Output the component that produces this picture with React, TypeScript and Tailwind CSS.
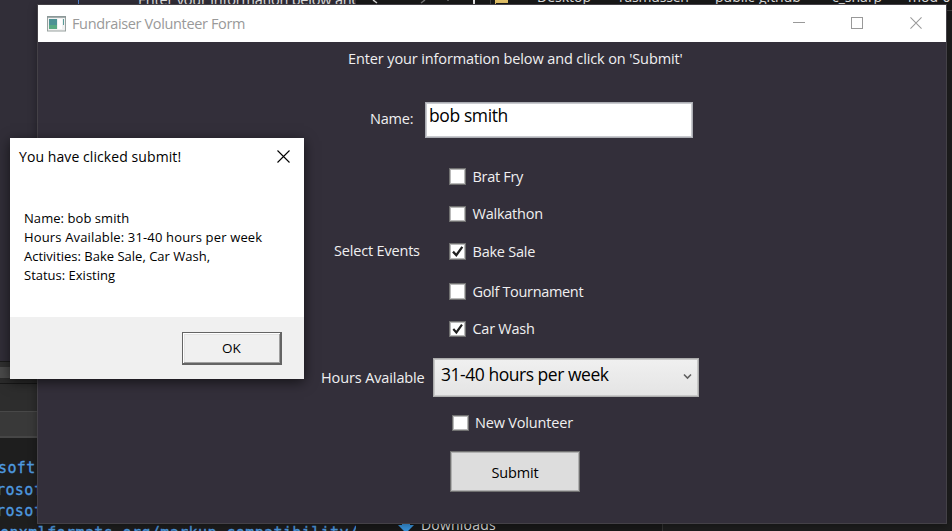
import type { ReactNode } from 'react';

const events = [
  { label: 'Brat Fry', checked: false, row: 'mt-[30px] h-[17px]', track: 'tracking-[-0.3px]' },
  { label: 'Walkathon', checked: false, row: 'mt-[21px] h-4', track: 'tracking-[-0.24px]' },
  { label: 'Bake Sale', checked: true, row: 'mt-[21px] h-[17px]', track: 'tracking-[-0.24px]' },
  { label: 'Golf Tournament', checked: false, row: 'mt-[23px] h-[17px]', track: 'tracking-[-0.33px]' },
  { label: 'Car Wash', checked: true, row: 'mt-[21px] h-4', track: 'tracking-[-0.26px]' },
];

function Check({ checked }: { checked: boolean }) {
  return (
    <span className="block h-full w-[17px] shrink-0 border border-[#707070] bg-white shadow-[inset_0_0_0_1px_#b9b9b9]">
      {checked && (
        <svg viewBox="0 0 15 15" className="h-full w-full" fill="none" stroke="#212121" strokeWidth="2.3">
          <path d="M3 7.6 6.3 11.2 12.3 2.8" />
        </svg>
      )}
    </span>
  );
}

function Cross({ className }: { className: string }) {
  return (
    <svg viewBox="0 0 13 13" className={className} fill="none" stroke="currentColor" strokeWidth="1.1">
      <path d="M.5.5l12 12M12.5.5l-12 12" />
    </svg>
  );
}

function Code({ children }: { children: ReactNode }) {
  return <div className="h-[21.5px] whitespace-pre">{children}</div>;
}

function Backdrop() {
  return (
    <div className="flex h-full bg-[#1e1e1e]">
      <div className="flex w-[356px] shrink-0 flex-col">
        <div className="flex h-[361px] shrink-0 bg-[#312e38]">
          <div className="h-full w-[78px]" />
          <div className="h-full w-px bg-[#5387d8]" />
          <div className="-mt-[12px] ml-[59px] h-6 w-[218px] overflow-hidden whitespace-nowrap text-[14.5px] leading-6 tracking-[-0.2px] text-[#e4e4e4]">
            Enter your information below and
          </div>
        </div>
        <div className="h-px shrink-0 bg-[#1b1b1b]" />
        <div className="h-[5px] shrink-0 bg-[#303030]" />
        <div className="h-[11px] shrink-0 bg-[#4a4a4a]" />
        <div className="h-[5px] shrink-0 bg-[#2b2b2b]" />
        <div className="h-px shrink-0 bg-[#181818]" />
        <div className="h-[27px] shrink-0 bg-[#2d2d2d]" />
        <div className="h-px shrink-0 bg-[#484848]" />
        <div className="h-6 shrink-0 bg-[#393939]" />
        <div className="h-0.5 shrink-0 bg-[#464646]" />
        <div className="h-[93px] shrink-0 overflow-hidden pt-[20px] font-['DejaVu_Sans_Mono',monospace] text-[15px] leading-[21.5px] tracking-[0.4px] text-[#4e9be0] [-webkit-text-stroke:0.3px_#4e9be0]">
          <Code><span className="-ml-[2px]">soft.com/winfx/</span></Code>
          <Code><span className="-ml-[4px]">rosoft.com/</span></Code>
          <Code><span className="-ml-[4px]">rosoft.com/</span></Code>
          <Code>enxmlformats.org/markup-compatibility/</Code>
        </div>
      </div>
      <div className="flex flex-1 flex-col overflow-hidden">
        <div className="flex h-[11px] shrink-0 overflow-hidden border-b border-[#3d3d3d] bg-[#191919] text-[14px] leading-5 text-[#e2e2e2]">
          <svg className="h-[5px] w-[140px] shrink-0" viewBox="0 0 140 5" fill="none">
            <path d="M17 0l4 3" stroke="#ddd" strokeWidth="1.5" />
            <path d="M69 0l-4 3" stroke="#777" strokeWidth="1.5" />
            <path d="M92 0v1" stroke="#999" />
            <path d="M118 0v4" stroke="#eee" strokeWidth="2" />
            <path d="M134.5 0v5" stroke="#444" />
            <path d="M140 0v4h-1v-4z" fill="#e8c66a" />
          </svg>
          <span className="h-[3px] w-3 shrink-0 bg-[#e8c66a]" />
          <div className="-mt-[13px] flex shrink-0 whitespace-nowrap">
            <span className="ml-[29px] w-[82px]">Desktop</span>
            <span className="w-[96px] tracking-[-0.2px]">rasmussen</span>
            <span className="w-[117px]">public-github</span>
            <span className="w-[76px]">c_sharp</span>
            <span>mod-01</span>
          </div>
        </div>
        <div className="h-[9px] shrink-0 bg-[#191919]" />
        <div className="flex-1 bg-[#1f1f1f]" />
        <div className="flex h-[11px] shrink-0">
          <div className="flex w-[306px] items-start bg-[#191919] pl-[42px]">
            <svg viewBox="0 0 16 11" className="h-[11px] w-4" fill="#3a96e0">
              <path d="M4 0h8v5h4l-6 6H6L0 5h4z" />
            </svg>
            <span className="-mt-[5px] ml-[7px] text-[14px] leading-5 tracking-[0.2px] text-[#dedede]">Downloads</span>
          </div>
          <div className="flex-1 border-l border-[#333] bg-[#1e1e1e]" />
        </div>
      </div>
    </div>
  );
}

function FormWindow() {
  return (
    <section className="absolute left-[37px] top-1 flex h-[520px] w-[910px] flex-col border border-[#444147] bg-[#332f3a] shadow-[0_2px_8px_rgba(0,0,0,.35)]">
      <header className="flex h-[37px] shrink-0 items-center bg-white text-[#999]">
        <svg viewBox="0 0 20 16" className="ml-[9px] h-4 w-5">
          <rect x=".5" y=".5" width="18" height="14.5" fill="#f1f1f1" stroke="#98a19f" />
          <path d="M0 1h19" stroke="#899696" strokeWidth="1.5" />
          <rect x="2" y="3" width="8" height="10" fill="#4e9395" />
          <rect x="2" y="9" width="8" height="4" fill="#5aaa83" />
          <rect x="11" y="3" width="4" height="10" fill="#fff" />
          <path d="M16.5 3v6" stroke="#5a9d9a" />
        </svg>
        <span className="ml-[5px] flex-1 text-[14.5px] leading-5 tracking-[-0.36px]">Fundraiser Volunteer Form</span>
        <span className="mb-[3px] h-px w-3 bg-[#999]" />
        <span className="mb-px ml-[46px] h-3 w-3 border border-[#999]" />
        <Cross className="mb-px ml-[47px] mr-[24px] h-3 w-3" />
      </header>
      <main className="text-[14.5px] leading-5 text-[#f0eff1]">
        <p className="ml-[310px] mt-[7px] h-5 whitespace-nowrap tracking-[-0.12px]">
          Enter your information below and click on 'Submit'
        </p>
        <div className="ml-[332px] mt-[33px] flex h-9">
          <label className="mt-[7px] w-[55px] tracking-[-0.2px]">Name:</label>
          <div className="h-9 w-[268px] border border-[#abadb3] bg-white pl-[3px] text-[17.5px] leading-6 tracking-[-0.4px] text-black shadow-[inset_0_0_0_1px_#c9cacf]">
            bob smith
          </div>
        </div>
        <div className="ml-[296px] flex h-[199px]">
          <span className="mt-[103px] w-[115px] tracking-[-0.18px]">Select Events</span>
          <div>
            {events.map((e) => (
              <div key={e.label} className={`flex items-center ${e.row}`}>
                <Check checked={e.checked} />
                <span className={`ml-[6.5px] whitespace-nowrap ${e.track}`}>{e.label}</span>
              </div>
            ))}
          </div>
        </div>
        <div className="ml-[283px] mt-[21px] flex h-[39px]">
          <label className="mt-[10px] w-[112px] whitespace-nowrap tracking-[-0.12px]">Hours Available</label>
          <div className="flex h-[39px] w-[266px] justify-between border border-[#acacac] bg-linear-to-b from-[#f0f0f0] to-[#e4e4e4] pl-[7px] pr-[6px] pt-[3px] text-[17.5px] leading-6 tracking-[-0.47px] text-black shadow-[inset_0_0_0_1px_#c8c8c8]">
            31-40 hours per week
            <svg viewBox="0 0 9 7" className="mt-[11px] h-[7px] w-[9px]" fill="none" stroke="#606060" strokeWidth="1.6">
              <path d="M1 1.5 4.5 5 8 1.5" />
            </svg>
          </div>
        </div>
        <div className="ml-[414px] mt-[18px] flex h-4 items-center">
          <Check checked={false} />
          <span className="ml-[6px] tracking-[-0.18px]">New Volunteer</span>
        </div>
        <button className="ml-[412px] mt-5 flex h-[41px] w-[130px] items-center justify-center border border-[#707070] bg-[#ddd] pt-0.5 tracking-[-0.2px] text-black shadow-[inset_0_0_0_1px_#b0b0b0]">
          Submit
        </button>
      </main>
    </section>
  );
}

function MessageBox() {
  return (
    <section className="absolute left-[10px] top-[138px] flex h-[241px] w-[294px] flex-col bg-white text-black shadow-[0_3px_12px_rgba(0,0,0,.6)]">
      <header className="flex h-9 items-center justify-between pl-[9px] pr-[14px] text-[14px] leading-5 tracking-[0.08px]">
        <span className="mt-[2px]">You have clicked submit!</span>
        <Cross className="h-[13px] w-[13px]" />
      </header>
      <div className="flex-1 whitespace-nowrap pl-[14px] pt-[35px] text-[13px] leading-[19px]">
        <p className="tracking-[0.06px]">Name: bob smith</p>
        <p className="tracking-[0.15px]">Hours Available: 31-40 hours per week</p>
        <p>Activities: Bake Sale, Car Wash,</p>
        <p>Status: Existing</p>
      </div>
      <footer className="flex h-[62px] justify-end bg-[#f0f0f0] pr-[22px] pt-[15px]">
        <button className="h-[33px] w-[100px] border border-b-2 border-r-2 border-[#646464] text-[13.5px] leading-[30px] shadow-[inset_1px_1px_0_#fff,inset_-1px_-1px_0_#a0a0a0,inset_2px_2px_0_#e3e3e3]">
          OK
        </button>
      </footer>
    </section>
  );
}

export default function App() {
  return (
    <div className="relative h-[531px] w-[952px] overflow-hidden font-['Open_Sans','Noto_Sans',sans-serif]">
      <Backdrop />
      <FormWindow />
      <MessageBox />
    </div>
  );
}
